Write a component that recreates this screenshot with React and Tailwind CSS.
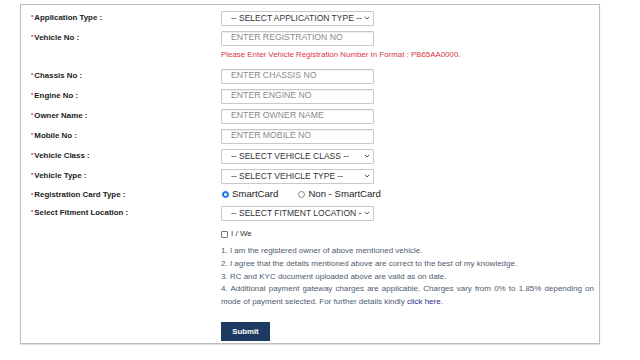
import React from 'react';

const Label = ({ children }) => (
  <div className="pl-[10px] text-[7.9px] font-bold text-[#222] flex items-center">
    <span className="text-[#e0242c] text-[6px] self-start mt-[5px] mr-[1px]">*</span>
    {children}
  </div>
);

const TextBox = ({ placeholder }) => (
  <div className="w-[153px] h-[15px] border border-[#c8c8c8] rounded-[1px] shadow-[inset_0_1px_1px_rgba(0,0,0,0.08)] flex items-center pl-[9px] text-[8.7px] text-[#8a8a8a]">
    {placeholder}
  </div>
);

const Chevron = () => (
  <svg width="6" height="4" viewBox="0 0 6 4" className="shrink-0">
    <path d="M0.8 0.8 L3 3 L5.2 0.8" fill="none" stroke="#444" strokeWidth="0.9" />
  </svg>
);

const Select = ({ text }) => (
  <div className="w-[153px] h-[15px] border border-[#c8c8c8] rounded-[1px] flex items-center justify-between pl-[9px] pr-[3px] text-[8.5px] text-[#333] whitespace-nowrap overflow-hidden">
    <span>{text}</span>
    <Chevron />
  </div>
);

const Row = ({ label, h = 'h-[20px]', children }) => (
  <>
    <div className={`${h} flex`}>{label && <Label>{label}</Label>}</div>
    <div className={`${h} flex items-center`}>{children}</div>
  </>
);

export default function App() {
  return (
    <div className="w-[640px] h-[360px] bg-white font-[Liberation_Sans,Arial,sans-serif] pt-[4px] pl-[20px]">
      <div className="w-[580px] h-[340px] border border-[#bdbdbd] shadow-[0_1px_1px_rgba(0,0,0,0.12)] pt-[3px]">
        <div className="grid grid-cols-[200px_1fr]">
          <Row label="Application Type :">
            <Select text="-- SELECT APPLICATION TYPE --" />
          </Row>
          <Row label="Vehicle No :">
            <TextBox placeholder="ENTER REGISTRATION NO" />
          </Row>
          <div className="h-[18px]" />
          <div className="h-[18px] pt-[2px] text-[7.9px] text-[#d9363e] leading-[9px] whitespace-nowrap">
            Please Enter Vehicle Registration Number In Format : PB65AA0000.
          </div>
          <Row label="Chassis No :">
            <TextBox placeholder="ENTER CHASSIS NO" />
          </Row>
          <Row label="Engine No :">
            <TextBox placeholder="ENTER ENGINE NO" />
          </Row>
          <Row label="Owner Name :">
            <TextBox placeholder="ENTER OWNER NAME" />
          </Row>
          <Row label="Mobile No :">
            <TextBox placeholder="ENTER MOBILE NO" />
          </Row>
          <Row label="Vehicle Class :">
            <Select text="-- SELECT VEHICLE CLASS --" />
          </Row>
          <Row label="Vehicle Type :">
            <Select text="-- SELECT VEHICLE TYPE --" />
          </Row>
          <Row label="Registration Card Type :" h="h-[17px]">
            <div className="flex items-center text-[9.6px] text-[#222]">
              <span className="w-[7px] h-[7px] rounded-full border border-[#1a73e8] bg-[#1a73e8] flex items-center justify-center mr-[3px] ml-[1px]">
                <span className="w-[3px] h-[3px] rounded-full bg-white" />
              </span>
              SmartCard
              <span className="w-[7px] h-[7px] rounded-full border border-[#8a8a8a] ml-[20px] mr-[3px]" />
              Non - SmartCard
            </div>
          </Row>
          <Row label="Select Fitment Location :">
            <Select text="-- SELECT FITMENT LOCATION -" />
          </Row>
          <div className="h-[22px]" />
          <div className="h-[22px] flex items-center text-[8px] text-[#333]">
            <span className="w-[7px] h-[7px] border border-[#777] rounded-[1px] mr-[3px]" />
            I / We
          </div>
          <div />
          <div className="pr-[5px] text-[8px] leading-[12.8px] text-[#4d5b6e]">
            <div>1. I am the registered owner of above mentioned vehicle.</div>
            <div>2. I agree that the details mentioned above are correct to the best of my knowledge.</div>
            <div>3. RC and KYC document uploaded above are valid as on date.</div>
            <div className="text-justify">
              4. Additional payment gateway charges are applicable. Charges vary from 0% to 1.85% depending on mode of payment selected. For further details kindly <span className="text-[#2b2a8c]">click here</span>.
            </div>
          </div>
          <div />
          <div className="pt-[8px]">
            <button className="w-[49px] h-[19px] bg-[#1c3a62] text-white text-[7.8px] font-bold">
              Submit
            </button>
          </div>
        </div>
      </div>
    </div>
  );
}
